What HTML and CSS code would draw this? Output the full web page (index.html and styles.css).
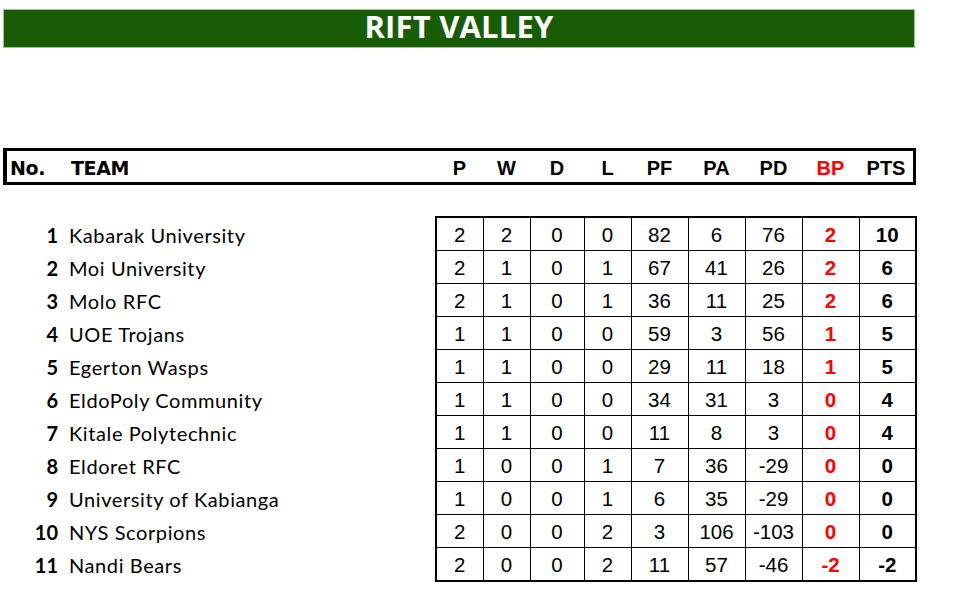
FILE: index.html
```html
<!DOCTYPE html>
<html>
<head>
<meta charset="utf-8">
<link rel="stylesheet" href="styles.css">
</head>
<body>
<div class="title">RIFT VALLEY</div>
<div class="header">
  <div class="hleft"><span class="hno">No.</span><span class="hteam">TEAM</span></div>
  <div class="hc">P</div>
  <div class="hc">W</div>
  <div class="hc">D</div>
  <div class="hc">L</div>
  <div class="hc">PF</div>
  <div class="hc">PA</div>
  <div class="hc">PD</div>
  <div class="hc red">BP</div>
  <div class="hc">PTS</div>
</div>
<table class="standings">
  <colgroup>
    <col class="c-rank"><col class="c-team">
    <col class="c47"><col class="c47"><col class="c54"><col class="c47">
    <col class="c57"><col class="c57"><col class="c57"><col class="c57"><col class="c57">
  </colgroup>
  <tbody>
    <tr><td class="rank">1</td><td class="team">Kabarak University</td><td class="n first">2</td><td class="n">2</td><td class="n">0</td><td class="n">0</td><td class="n">82</td><td class="n">6</td><td class="n">76</td><td class="n bp">2</td><td class="n pts">10</td></tr>
    <tr><td class="rank">2</td><td class="team">Moi University</td><td class="n first">2</td><td class="n">1</td><td class="n">0</td><td class="n">1</td><td class="n">67</td><td class="n">41</td><td class="n">26</td><td class="n bp">2</td><td class="n pts">6</td></tr>
    <tr><td class="rank">3</td><td class="team">Molo RFC</td><td class="n first">2</td><td class="n">1</td><td class="n">0</td><td class="n">1</td><td class="n">36</td><td class="n">11</td><td class="n">25</td><td class="n bp">2</td><td class="n pts">6</td></tr>
    <tr><td class="rank">4</td><td class="team">UOE Trojans</td><td class="n first">1</td><td class="n">1</td><td class="n">0</td><td class="n">0</td><td class="n">59</td><td class="n">3</td><td class="n">56</td><td class="n bp">1</td><td class="n pts">5</td></tr>
    <tr><td class="rank">5</td><td class="team">Egerton Wasps</td><td class="n first">1</td><td class="n">1</td><td class="n">0</td><td class="n">0</td><td class="n">29</td><td class="n">11</td><td class="n">18</td><td class="n bp">1</td><td class="n pts">5</td></tr>
    <tr><td class="rank">6</td><td class="team">EldoPoly Community</td><td class="n first">1</td><td class="n">1</td><td class="n">0</td><td class="n">0</td><td class="n">34</td><td class="n">31</td><td class="n">3</td><td class="n bp">0</td><td class="n pts">4</td></tr>
    <tr><td class="rank">7</td><td class="team">Kitale Polytechnic</td><td class="n first">1</td><td class="n">1</td><td class="n">0</td><td class="n">0</td><td class="n">11</td><td class="n">8</td><td class="n">3</td><td class="n bp">0</td><td class="n pts">4</td></tr>
    <tr><td class="rank">8</td><td class="team">Eldoret RFC</td><td class="n first">1</td><td class="n">0</td><td class="n">0</td><td class="n">1</td><td class="n">7</td><td class="n">36</td><td class="n">-29</td><td class="n bp">0</td><td class="n pts">0</td></tr>
    <tr><td class="rank">9</td><td class="team">University of Kabianga</td><td class="n first">1</td><td class="n">0</td><td class="n">0</td><td class="n">1</td><td class="n">6</td><td class="n">35</td><td class="n">-29</td><td class="n bp">0</td><td class="n pts">0</td></tr>
    <tr><td class="rank">10</td><td class="team">NYS Scorpions</td><td class="n first">2</td><td class="n">0</td><td class="n">0</td><td class="n">2</td><td class="n">3</td><td class="n">106</td><td class="n">-103</td><td class="n bp">0</td><td class="n pts">0</td></tr>
    <tr><td class="rank">11</td><td class="team">Nandi Bears</td><td class="n first">2</td><td class="n">0</td><td class="n">0</td><td class="n">2</td><td class="n">11</td><td class="n">57</td><td class="n">-46</td><td class="n bp">-2</td><td class="n pts">-2</td></tr>
  </tbody>
</table>
</body>
</html>
```
FILE: styles.css
```css
html, body {
  margin: 0;
  padding: 0;
  background: #ffffff;
}
body {
  font-family: "Liberation Sans", Arial, sans-serif;
  color: #000;
}
.title {
  margin: 9px 0 0 3px;
  width: 912px;
  height: 39px;
  box-sizing: border-box;
  background: #185c05;
  border: 1px solid #9fbf95;
  color: #ffffff;
  font-family: "Open Sans", sans-serif;
  font-weight: 700;
  font-size: 31px;
  line-height: 33px;
  text-align: center;
  letter-spacing: 0.2px;
}
.header {
  margin: 100px 0 0 3px;
  width: 913px;
  height: 37px;
  box-sizing: border-box;
  border: 3px solid #000;
  border-left-width: 4px;
  padding-top: 3px;
  display: grid;
  grid-template-columns: 429px 47px 47px 54px 47px 57px 57px 57px 57px 1fr;
  align-items: center;
}
.hleft {
  display: flex;
  align-items: center;
  font-family: "DejaVu Sans", sans-serif;
  font-weight: 700;
  font-size: 19px;
  letter-spacing: -0.4px;
}
.hno {
  width: 61px;
  padding-left: 3px;
}
.hc {
  text-align: center;
  font-family: "Liberation Sans", Arial, sans-serif;
  font-weight: 700;
  font-size: 20px;
}
.red {
  color: #ff0000;
}
.standings {
  margin-top: 31px;
  border-collapse: collapse;
  table-layout: fixed;
  width: 916px;
}
.c-rank { width: 59px; }
.c-team { width: 377px; }
.c47 { width: 47px; }
.c54 { width: 54px; }
.c57 { width: 57px; }
.standings td {
  height: 30px;
  padding: 2px 0 0 0;
}
.standings td.rank {
  text-align: right;
  padding-right: 1px;
  font-family: Lato, sans-serif;
  font-weight: 700;
  font-size: 20px;
}
.standings td.team {
  padding-left: 10px;
  font-family: Lato, sans-serif;
  font-size: 20px;
  letter-spacing: 0.6px;
  white-space: nowrap;
}
.n {
  border: 1px solid #000;
  text-align: center;
  font-size: 20.5px;
}
.standings tr:first-child .n { border-top-width: 2px; }
.standings tr:last-child .n { border-bottom-width: 2px; }
.n.first { border-left-width: 2px; }
.n.pts { border-right-width: 2px; font-weight: 700; }
.n.bp { color: #ff0000; font-weight: 700; }
```
